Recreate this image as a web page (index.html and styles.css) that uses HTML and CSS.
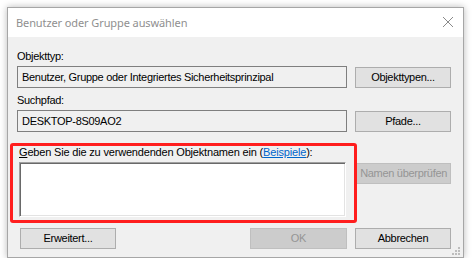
FILE: index.html
```html
<!DOCTYPE html>
<html lang="de">
<head>
<meta charset="utf-8">
<title>Benutzer oder Gruppe auswählen</title>
<link rel="stylesheet" href="styles.css">
</head>
<body>
<div class="dialog">
  <div class="titlebar">
    <span class="title">Benutzer oder Gruppe auswählen</span>
    <svg class="close" width="12" height="12" viewBox="0 0 12 12"><path d="M1 1 L11 11 M11 1 L1 11" stroke="#8a8a8a" stroke-width="1" fill="none"/></svg>
  </div>
  <div class="content">
    <div class="label l1">Objekttyp:</div>
    <div class="row r1">
      <div class="field">Benutzer, Gruppe oder Integriertes Sicherheitsprinzipal</div>
      <div class="btn">Objekttypen...</div>
    </div>
    <div class="label l2">Suchpfad:</div>
    <div class="row r2">
      <div class="field">DESKTOP-8S09AO2</div>
      <div class="btn">Pfade...</div>
    </div>
    <div class="label l3"><u>G</u>eben Sie die zu verwendenden Objektnamen ein (<a class="link">Beispiele</a>):</div>
    <div class="row r3">
      <div class="area"></div>
      <div class="btn disabled chk">Namen überprüfen</div>
    </div>
    <div class="row r4">
      <div class="btn">Erweitert...</div>
      <div class="spacer"></div>
      <div class="btn disabled">OK</div>
      <div class="btn">Abbrechen</div>
    </div>
  </div>
  <div class="highlight"></div>
  <svg class="grip" width="8" height="8" viewBox="0 0 8 8">
    <rect x="6" y="0" width="2" height="2" fill="#bdbdbd"/>
    <rect x="3" y="3" width="2" height="2" fill="#bdbdbd"/>
    <rect x="6" y="3" width="2" height="2" fill="#bdbdbd"/>
    <rect x="0" y="6" width="2" height="2" fill="#bdbdbd"/>
    <rect x="3" y="6" width="2" height="2" fill="#bdbdbd"/>
    <rect x="6" y="6" width="2" height="2" fill="#bdbdbd"/>
  </svg>
</div>
</body>
</html>
```
FILE: styles.css
```css
html, body {
  margin: 0;
  padding: 0;
  background: #ffffff;
}
body {
  padding: 7px 0 0 7px;
  font-family: "Liberation Sans", Arial, sans-serif;
  font-size: 11px;
  letter-spacing: -0.3px;
  color: #000;
}
.dialog {
  position: relative;
  width: 455px;
  height: 249px;
  border: 1px solid #a6a6a6;
  background: #f0f0f0;
  box-shadow: 0 0 7px rgba(0, 0, 0, 0.28);
  display: flex;
  flex-direction: column;
}
.titlebar {
  height: 29px;
  background: #ffffff;
  display: flex;
  align-items: center;
  justify-content: space-between;
  padding: 0 9px 0 8px;
  flex: none;
}
.title {
  font-family: "Noto Sans", "Open Sans", sans-serif;
  font-size: 11px;
  letter-spacing: -0.1px;
  color: #8f8f8f;
}
.close {
  display: block;
  margin-top: -1px;
}
.content {
  padding: 0 12px 0 9px;
  display: flex;
  flex-direction: column;
}
.label {
  height: 13px;
  line-height: 13px;
  white-space: nowrap;
}
.l1 { margin-top: 13px; }
.l2 { margin-top: 6px; }
.l3 { margin-top: 14px; padding-left: 2px; letter-spacing: -0.18px; }
.row {
  display: flex;
  align-items: flex-start;
  gap: 8px;
}
.r1 { margin-top: 3px; }
.r2 { margin-top: 3px; }
.r3 { margin-top: 3px; }
.r4 { margin-top: 11px; padding-left: 3px; }
.field {
  box-sizing: border-box;
  width: 330px;
  height: 22px;
  border: 1px solid #7f7f7f;
  background: #f0f0f0;
  padding: 0 4px;
  line-height: 20px;
  white-space: nowrap;
  overflow: hidden;
}
.btn {
  box-sizing: border-box;
  width: 96px;
  height: 21px;
  margin-top: 1px;
  border: 1px solid #adadad;
  background: #e1e1e1;
  text-align: center;
  line-height: 19px;
  white-space: nowrap;
}
.btn.disabled {
  background: #cccccc;
  border-color: #bfbfbf;
  color: #959595;
}
.chk {
  margin-left: 2px;
  width: 95px;
}
.area {
  box-sizing: border-box;
  width: 328px;
  height: 55px;
  margin-left: 2px;
  background: #ffffff;
  border: 1px solid;
  border-color: #a0a0a0 #ffffff #ffffff #a0a0a0;
  box-shadow: inset 1px 1px 0 #696969, inset -1px -1px 0 #e3e3e3;
}
.r4 .btn { margin-top: 0; }
.spacer { flex: 1; }
.r4 .btn.disabled { width: 97px; }
.link {
  color: #0066cc;
  text-decoration: underline;
}
.highlight {
  position: absolute;
  left: 2px;
  top: 135px;
  width: 341px;
  height: 74px;
  border: 3px solid #ff1e1e;
  border-radius: 3px;
}
.grip {
  position: absolute;
  right: 3px;
  bottom: 2px;
}
```
